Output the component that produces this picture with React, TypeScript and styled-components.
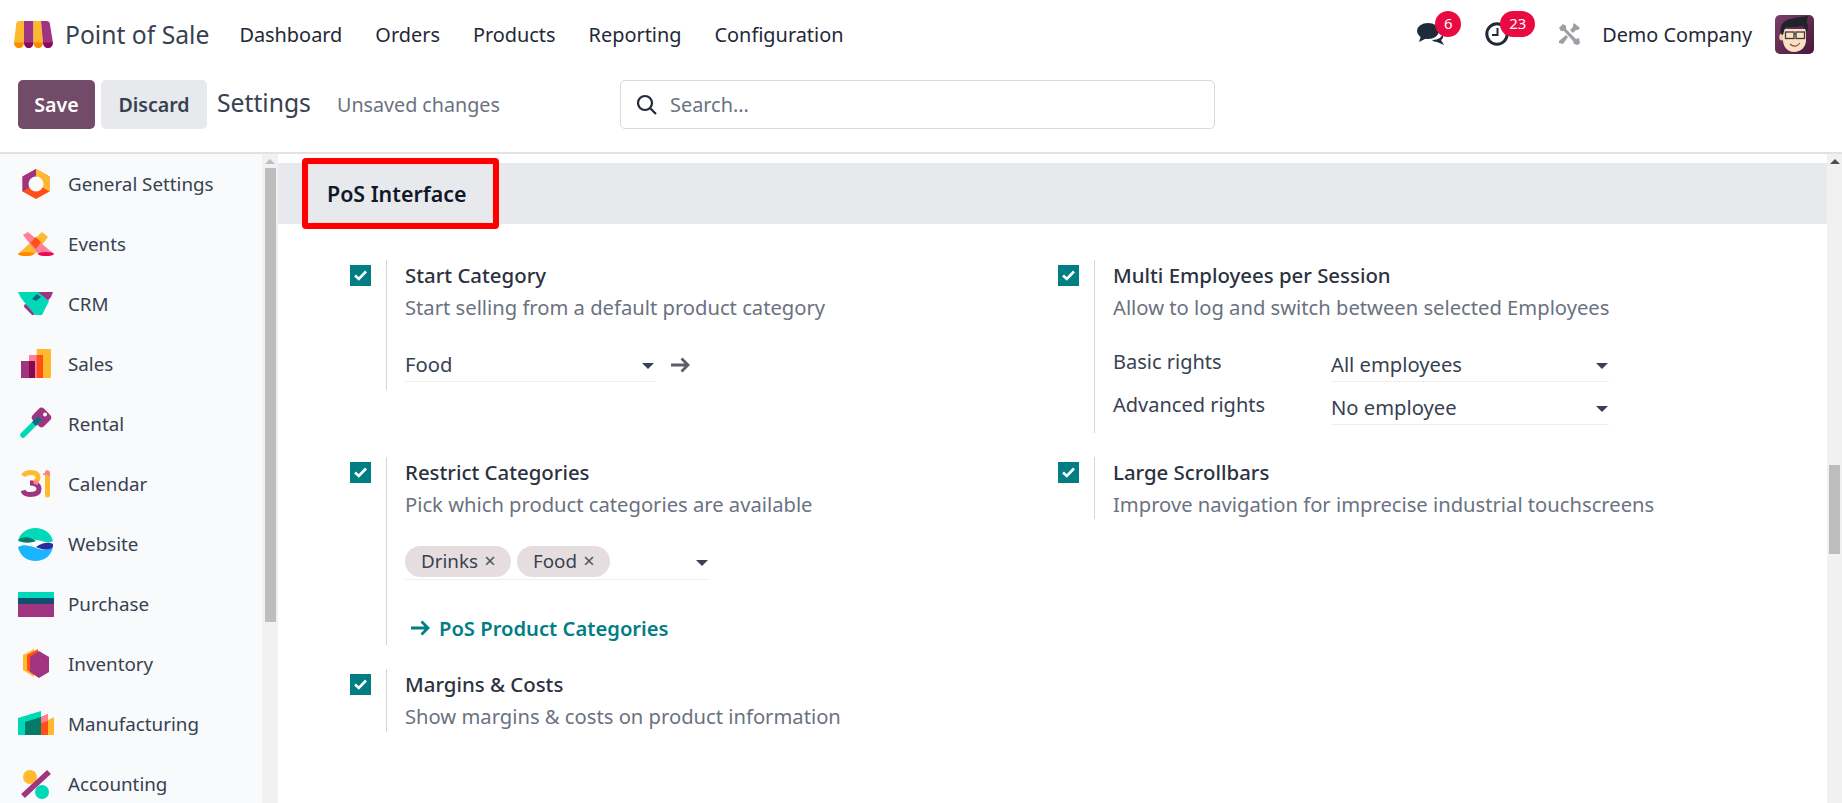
import React from "react";
import styled, { createGlobalStyle } from "styled-components";

const Global = createGlobalStyle`
  html, body { margin: 0; padding: 0; height: 100%; background: #fff; overflow: hidden; }
  #root { height: 100%; }
  * { box-sizing: border-box; }
  body { font-family: "Noto Sans", "Open Sans", sans-serif; font-size: 20px; color: #374151; }
`;

const Page = styled.div`
  width: 1842px; height: 803px; display: flex; flex-direction: column; overflow: hidden;
`;
const TopNav = styled.header`
  height: 68px; display: flex; align-items: center; padding-left: 14px; flex: none;
`;
const AppTitle = styled.span`
  font-size: 24.7px; color: #374151; margin-left: 12px; margin-right: 30px;
`;
const NavItem = styled.a`
  font-size: 19.9px; color: #1f2937; margin-right: 33px;
`;
const Spacer = styled.div` flex: 1; `;
const Systray = styled.div`
  display: flex; align-items: center; padding-right: 28px; height: 68px;
`;
const TrayIcon = styled.div`
  position: relative; display: flex; align-items: center; margin-right: ${p => p.$mr}px; width: ${p => p.$w}px; height: 26px;
`;
const Badge = styled.span`
  position: absolute; top: ${p => p.$top}px; left: ${p => p.$left}px; min-width: ${p => p.$w}px; height: 26px;
  border-radius: 13px; background: #ea0a42; color: #fff; font-size: 15px; display: flex; align-items: center; justify-content: center; padding-bottom: 2px;
`;
const Company = styled.span`
  font-size: 19.8px; color: #1f2937; margin-right: 23px;
`;
const ControlBar = styled.div`
  height: 86px; flex: none; border-bottom: 2px solid #e2e2e2; display: flex; align-items: flex-start; padding: 12px 0 0 18px;
`;
const SaveButton = styled.button`
  width: 77px; height: 49px; border: 0; border-radius: 5px; background: #714b67; color: #fff; font: 600 19.6px "Noto Sans", sans-serif; margin-right: 6px; padding: 0;
`;
const DiscardButton = styled.button`
  width: 106px; height: 49px; border: 0; border-radius: 5px; background: #e7e9ed; color: #374151; font: 600 19.6px "Noto Sans", sans-serif; margin-right: 10px; padding: 0;
`;
const Breadcrumb = styled.span`
  font-size: 24.7px; line-height: 46px; color: #374151; width: 120px;
`;
const Unsaved = styled.span`
  font-size: 19.7px; line-height: 50px; color: #6b7280; width: 283px;
`;
const SearchBox = styled.div`
  width: 595px; height: 49px; border: 1px solid #d8dadd; border-radius: 5px; display: flex; align-items: center; padding-left: 15px; gap: 12px;
  color: #6b7280; font-size: 19.9px;
`;
const Body = styled.div`
  flex: 1; display: flex; min-height: 0;
`;
const Sidebar = styled.nav`
  width: 262px; flex: none; background: #f9fafb; display: flex; flex-direction: column;
`;
const SideItem = styled.div`
  height: 60px; flex: none; display: flex; align-items: center; padding-left: 18px; gap: 14px; color: #374151; font-size: 18.8px;
`;
const SideTrack = styled.div`
  width: 16px; flex: none; background: #f1f1f1; display: flex; flex-direction: column; align-items: center;
`;
const MainTrack = styled.div`
  width: 15px; flex: none; background: #f1f1f1; display: flex; flex-direction: column; align-items: center;
`;
const UpArrow = styled.div`
  width: 0; height: 0; border-left: 5px solid transparent; border-right: 5px solid transparent; border-bottom: 5px solid ${p => p.$c}; margin-top: 5px;
`;
const Thumb = styled.div`
  width: 11px; background: #bdbdbd; margin-top: ${p => p.$top}px; height: ${p => p.$h}px;
`;
const Main = styled.main`
  flex: 1; min-width: 0; padding-top: 9px;
`;
const SectionBand = styled.div`
  position: relative; height: 61px; background: #e7e9ed; display: flex; align-items: center; padding-left: 49px;
  font-size: 21.4px; font-weight: 600; color: #111827;
`;
const Highlight = styled.div`
  position: absolute; left: 24px; top: -5px; width: 197px; height: 71px; border: 6px solid #f00; border-radius: 4px; box-shadow: inset 0 0 0 1px #f7dcdc;
`;
const Settings = styled.div`
  display: grid; grid-template-columns: 708px 708px; row-gap: 24px; padding: 36px 0 0 72px; align-items: start;
`;
const Setting = styled.div`
  display: flex; height: ${p => p.$h}px;
`;
const CheckCol = styled.div`
  width: 36px; flex: none; padding-top: 5px;
`;
const Check = styled.div`
  width: 21px; height: 21px; background: #017e84; display: flex; align-items: center; justify-content: center;
`;
const Content = styled.div`
  border-left: 1px solid #d4d6d9; padding-left: 18px; flex: 1;
`;
const Title = styled.div`
  font-size: 20.4px; font-weight: 500; color: #2b3240; line-height: 31px;
`;
const Desc = styled.div`
  font-size: 20.2px; color: #6b7280; line-height: 32px;
`;
const FieldRow = styled.div`
  display: flex; align-items: center; margin-top: ${p => p.$mt}px;
`;
const Underlined = styled.div`
  position: relative; width: ${p => p.$w}px; height: ${p => p.$h}px; border-bottom: 1px solid #eceef0; display: flex; align-items: center; color: #374151; font-size: 20.2px;
  &::after {
    content: ""; position: absolute; right: ${p => p.$caret}px; top: 50%; margin-top: -1px;
    border-left: 6px solid transparent; border-right: 6px solid transparent; border-top: 6px solid #374151;
  }
`;
const FieldLabel = styled.div`
  width: 218px; font-size: 20px; color: #374151; flex: none; margin-bottom: 6px;
`;
const ArrowWrap = styled.div`
  margin-left: 15px; display: flex; align-items: center;
`;
const Tag = styled.span`
  height: 31px; padding: 0 15px 0 16px; border-radius: 16px; background: #e6dede; color: #374151; font-size: 18.8px; display: flex; align-items: center; gap: 6px; margin-right: 6px;
`;
const TagX = styled.span`
  width: 12px; font-size: 20px; color: #4b5563; line-height: 1; text-align: center;
`;
const LinkRow = styled.a`
  display: flex; align-items: center; gap: 9px; margin: 34px 0 0 5px; color: #017e84; font-weight: 600; font-size: 20.2px;
`;

const Arrow = ({ c, s = 20 }: { c: string; s?: number }) => (
  <svg width={s} height={s} viewBox="0 0 20 20" fill="none">
    <path d="M1 10H18M11.500 3.500L18 10L11.500 16.500" stroke={c} strokeWidth="2.800" />
  </svg>
);

const Logo = () => (
  <svg width="39" height="27" viewBox="0 0 39 27">
    <path d="M5 0H10V22H0L2.300 2.500C2.500 1 3.500 0 5 0Z" fill="#fdb92d" />
    <path d="M10 0H19.500V22H10Z" fill="#a03481" />
    <path d="M19.500 0H27L29 22H19.500Z" fill="#fdb92d" />
    <path d="M27 0H33C34.500 0 35.500 1 35.800 2.500L39 22H29Z" fill="#a03481" />
    <path d="M0 21.500H10C10 25 8 27 5 27S0 25 0 21.500Z" fill="#ff8a00" />
    <path d="M10 21.500H19.500C19.500 25 17.500 27 14.750 27S10 25 10 21.500Z" fill="#870b5a" />
    <path d="M19.500 21.500H29C29 25 27 27 24.250 27S19.500 25 19.500 21.500Z" fill="#ff8a00" />
    <path d="M29 21.500H39C39 25 37 27 34 27S29 25 29 21.500Z" fill="#870b5a" />
  </svg>
);

const Chat = () => (
  <svg width="28" height="22" viewBox="0 0 28 22" fill="#1f2a3d">
    <ellipse cx="11" cy="8" rx="11" ry="8" />
    <path d="M4 13L2 19L10 15Z" />
    <path d="M15 17C22 17 25 14 26 10C27 13 26 16 24 17L27 22L20 19C18 19 16 18 15 17Z" />
  </svg>
);
const Clock = () => (
  <svg width="24" height="24" viewBox="0 0 24 24" fill="none" stroke="#1f2a3d">
    <circle cx="12" cy="12" r="10.200" strokeWidth="3" />
    <path d="M12.500 6V13H7" strokeWidth="2" />
  </svg>
);
const Tools = () => (
  <svg width="22" height="22" viewBox="0 0 22 22" fill="#9ca0a6">
    <path d="M1 5L5 1L8 3L8 6L18 16L21 15L22 20L20 22L16 21L15 18L6 8L3 8Z" />
    <path d="M16 0L22 5L20 7L18 7L15 10L12 7L15 4L15 2Z" />
    <path d="M8 12L10 14L5 21L1 20L1 18Z" />
  </svg>
);
const Avatar = () => (
  <svg width="39" height="39" viewBox="0 0 39 39">
    <defs>
      <linearGradient id="av" x1="0" y1="0" x2="1" y2="1">
        <stop offset="0" stopColor="#7b3f6d" />
        <stop offset="1" stopColor="#4a1738" />
      </linearGradient>
    </defs>
    <rect width="39" height="39" rx="5" fill="url(#av)" />
    <ellipse cx="6.800" cy="22" rx="2.600" ry="3.500" fill="#f3c69f" />
    <path d="M8 14H31V25C31 32 26 37 19 37C12 37 8 31 8 25Z" fill="#fbe0c6" />
    <path d="M6 19C4 10 9 5 16 4C21 2 28 2 33 1C33 4 31 6 32 8C34 11 33 15 31 18C31 14 29 11 26 11C21 13 15 12 11 12C9 14 9 17 8 20Z" fill="#20242a" />
    <rect x="10.500" y="17" width="8.500" height="6.500" fill="none" stroke="#3a3a3a" strokeWidth="1.300" />
    <rect x="21" y="17" width="8.500" height="6.500" fill="none" stroke="#3a3a3a" strokeWidth="1.300" />
    <path d="M19 19H21" stroke="#3a3a3a" strokeWidth="1.200" />
    <path d="M15 29C18 32 22 32 25 28" stroke="#8a4a3a" strokeWidth="1.200" fill="none" />
  </svg>
);
const SearchIcon = () => (
  <svg width="22" height="22" viewBox="0 0 22 22" fill="none" stroke="#1f2937" strokeWidth="2.200">
    <circle cx="9" cy="9" r="7" />
    <path d="M14 14L20 20" />
  </svg>
);
const CheckMark = () => (
  <svg width="13" height="11" viewBox="0 0 13 11" fill="none" stroke="#fff" strokeWidth="2.600">
    <path d="M1 5.500L4.800 9L12 1.500" />
  </svg>
);

const iconDefs: Record<string, React.ReactNode> = {
  general: (
    <>
      <path d="M18 3L31.500 10.500V25.500L18 33L4.500 25.500V10.500Z" fill="#ff4f17" />
      <path d="M18 3L4.500 10.500V25.500L12 21V15L18 11Z" fill="#a03481" />
      <path d="M18 3L31.500 10.500V25.500L24 21V15L18 11Z" fill="#ffb92d" />
      <circle cx="18" cy="18" r="7.500" fill="#f9fafb" />
    </>
  ),
  events: (
    <>
      <path d="M24 6L30 11L17 28H0Z" fill="#ffb92d" />
      <path d="M10 6L5 9L20 28H36Z" fill="#ff7f98" />
      <path d="M17.500 11L23 16L18 23L12.500 17Z" fill="#ff4f17" />
      <ellipse cx="8" cy="28" rx="8" ry="2" fill="#ff8a00" />
      <ellipse cx="28" cy="28" rx="8" ry="2" fill="#ea0a52" />
    </>
  ),
  crm: (
    <>
      <path d="M14 6H35L33 11L28 17L22 12Z" fill="#a03481" />
      <path d="M8 20L15 27" stroke="#a03481" strokeWidth="4" strokeLinecap="round" />
      <path d="M0 6H20L31 15L24 29H17L7 17L3 12Z" fill="#00d9b8" />
      <path d="M14 13L19 8L23 11L18 15Z" fill="#136a80" />
    </>
  ),
  sales: (
    <>
      <rect x="18.700" y="3" width="14.300" height="29" rx="1" fill="#ffb92d" />
      <rect x="11" y="9" width="14" height="23" fill="#ff7f98" />
      <rect x="18.700" y="9" width="6.300" height="23" fill="#ff4f17" />
      <rect x="3" y="15" width="14" height="17" fill="#a03481" />
      <rect x="11" y="15" width="6" height="17" fill="#87084e" />
    </>
  ),
  rental: (
    <>
      <rect x="15.500" y="3.500" width="16" height="16" rx="4" fill="#a03481" transform="rotate(45 23.500 11.500)" />
      <path d="M5 29L20 14" stroke="#00d9b8" strokeWidth="5.500" strokeLinecap="round" />
      <path d="M16 18L22 12" stroke="#136a80" strokeWidth="5.500" />
      <circle cx="27" cy="8.500" r="2" fill="#f9fafb" />
    </>
  ),
  calendar: (
    <>
      <path d="M5.500 10C7 6.500 11 6.500 13 6.500C17 6.500 20 8 20 11.500C20 15 16 17 12 17" fill="none" stroke="#ffb92d" strokeWidth="5" />
      <path d="M12 17C17 17 21 19 21 23C21 27 17 28.500 12 28.500C9 28.500 6 27.500 5 24.500" fill="none" stroke="#a03481" strokeWidth="5" />
      <path d="M15 15.500L20 14L20 19L16 18Z" fill="#ff7f98" />
      <path d="M29.500 6.500V29" stroke="#ffb92d" strokeWidth="5" strokeLinecap="round" />
      <path d="M24.500 9L29 4L32 6.500V11L29 9Z" fill="#ff7f98" />
    </>
  ),
  website: (
    <>
      <path d="M0 15C2 7 9 2 17.500 2C26 2 33 7 35 15C28 19 22 12 14 14C9 15 5 17 0 15Z" fill="#00d9b8" />
      <path d="M0 14C7 9 13 12 18 15C13 17 6 18 0 14Z" fill="#057a66" />
      <path d="M0 21C8 17 14 21 21 23C26 24 31 24 35 21C33 30 26 35 17.500 35C9 35 2 30 0 21Z" fill="#1ab5ff" />
      <path d="M18 21C25 16 31 16 35 18C35 20 35 21 34 22C28 25 23 23 18 21Z" fill="#2d2a9e" />
    </>
  ),
  purchase: (
    <>
      <rect x="0" y="6" width="36" height="25" fill="#a03481" />
      <rect x="0" y="6" width="36" height="6" fill="#00d9b8" />
      <rect x="0" y="12" width="36" height="6" rx="1" fill="#0f4f72" />
    </>
  ),
  inventory: (
    <>
      <path d="M16 3L5 9V24L16 31Z" fill="#ffb92d" />
      <path d="M20 3L9 9V24L20 31Z" fill="#ff4f17" />
      <path d="M21 5L31 11V26L21 32L12 26V11Z" fill="#a03481" />
    </>
  ),
  manufacturing: (
    <>
      <path d="M0 12L23 5V29H0Z" fill="#00d9b8" />
      <path d="M7 16L23 11V29H7Z" fill="#057a66" />
      <path d="M23 11L30 8V29H23Z" fill="#ff4f17" />
      <path d="M23 11L30 8V15L23 17Z" fill="#ff7f98" />
      <path d="M30 14L36 11V29H30Z" fill="#ffb92d" />
    </>
  ),
  accounting: (
    <>
      <circle cx="12" cy="11" r="7" fill="#ffb92d" />
      <circle cx="24" cy="26" r="7" fill="#00d9b8" />
      <path d="M5 30L31 6" stroke="#a03481" strokeWidth="5.500" />
    </>
  ),
};

const SideIcon = ({ name }: { name: string }) => (
  <svg width="36" height="36" viewBox="0 0 36 36" style={{ flex: "none" }}>
    {iconDefs[name]}
  </svg>
);

const apps: [string, string][] = [
  ["general", "General Settings"],
  ["events", "Events"],
  ["crm", "CRM"],
  ["sales", "Sales"],
  ["rental", "Rental"],
  ["calendar", "Calendar"],
  ["website", "Website"],
  ["purchase", "Purchase"],
  ["inventory", "Inventory"],
  ["manufacturing", "Manufacturing"],
  ["accounting", "Accounting"],
];

const SettingBox = ({ h, title, desc, children }: { h: number; title: string; desc: string; children?: React.ReactNode }) => (
  <Setting $h={h}>
    <CheckCol>
      <Check><CheckMark /></Check>
    </CheckCol>
    <Content>
      <Title>{title}</Title>
      <Desc>{desc}</Desc>
      {children}
    </Content>
  </Setting>
);

export default function App() {
  return (
    <Page>
      <Global />
      <TopNav>
        <Logo />
        <AppTitle>Point of Sale</AppTitle>
        {["Dashboard", "Orders", "Products", "Reporting", "Configuration"].map(n => (
          <NavItem key={n}>{n}</NavItem>
        ))}
        <Spacer />
        <Systray>
          <TrayIcon $w={28} $mr={40}>
            <Chat />
            <Badge $top={-10} $left={18} $w={26}>6</Badge>
          </TrayIcon>
          <TrayIcon $w={24} $mr={49}>
            <Clock />
            <Badge $top={-10} $left={15} $w={35}>23</Badge>
          </TrayIcon>
          <TrayIcon $w={22} $mr={22}>
            <Tools />
          </TrayIcon>
          <Company>Demo Company</Company>
          <Avatar />
        </Systray>
      </TopNav>
      <ControlBar>
        <SaveButton>Save</SaveButton>
        <DiscardButton>Discard</DiscardButton>
        <Breadcrumb>Settings</Breadcrumb>
        <Unsaved>Unsaved changes</Unsaved>
        <SearchBox>
          <SearchIcon />
          Search...
        </SearchBox>
      </ControlBar>
      <Body>
        <Sidebar>
          {apps.map(([k, label]) => (
            <SideItem key={k}>
              <SideIcon name={k} />
              {label}
            </SideItem>
          ))}
        </Sidebar>
        <SideTrack>
          <UpArrow $c="#bdbdbd" />
          <Thumb $top={4} $h={454} />
        </SideTrack>
        <Main>
          <SectionBand>
            PoS Interface
            <Highlight />
          </SectionBand>
          <Settings>
            <SettingBox h={130} title="Start Category" desc="Start selling from a default product category">
              <FieldRow $mt={24}>
                <Underlined $w={250} $h={35} $caret={1}>Food</Underlined>
                <ArrowWrap><Arrow c="#5f5c6b" /></ArrowWrap>
              </FieldRow>
            </SettingBox>
            <SettingBox h={173} title="Multi Employees per Session" desc="Allow to log and switch between selected Employees">
              <FieldRow $mt={24}>
                <FieldLabel>Basic rights</FieldLabel>
                <Underlined $w={278} $h={35} $caret={1}>All employees</Underlined>
              </FieldRow>
              <FieldRow $mt={8}>
                <FieldLabel>Advanced rights</FieldLabel>
                <Underlined $w={278} $h={35} $caret={1}>No employee</Underlined>
              </FieldRow>
            </SettingBox>
            <SettingBox h={188} title="Restrict Categories" desc="Pick which product categories are available">
              <FieldRow $mt={23}>
                <Underlined $w={303} $h={37} $caret={0}>
                  <Tag>Drinks <TagX>×</TagX></Tag>
                  <Tag>Food <TagX>×</TagX></Tag>
                </Underlined>
              </FieldRow>
              <LinkRow><Arrow c="#017e84" />PoS Product Categories</LinkRow>
            </SettingBox>
            <SettingBox h={62} title="Large Scrollbars" desc="Improve navigation for imprecise industrial touchscreens" />
            <SettingBox h={63} title="Margins & Costs" desc="Show margins & costs on product information" />
          </Settings>
        </Main>
        <MainTrack>
          <UpArrow $c="#505050" />
          <Thumb $top={301} $h={89} />
        </MainTrack>
      </Body>
    </Page>
  );
}
